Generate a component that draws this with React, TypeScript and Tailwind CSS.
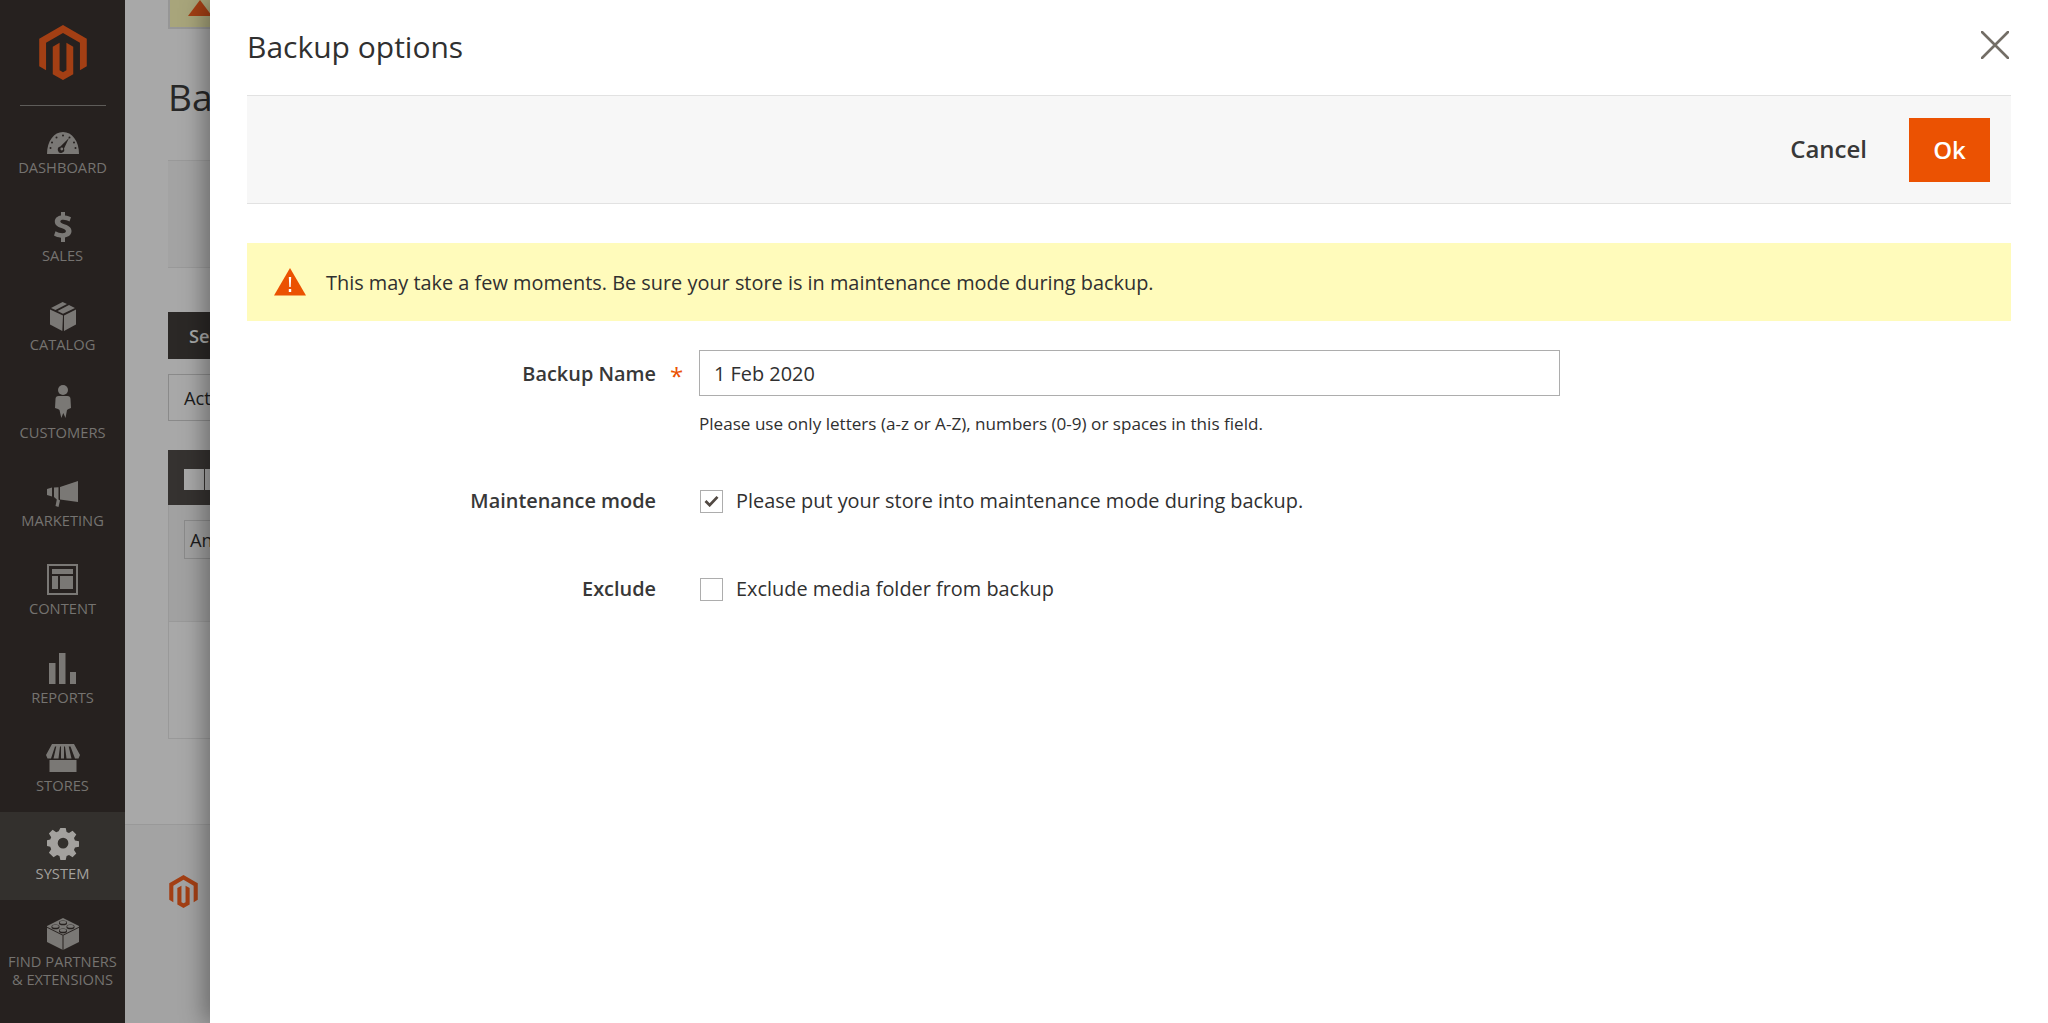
import React from "react";

const LOGO = "M21.6 0 0 12.5v25l6.2 3.6V16.1L21.6 7.2 37 16.1v25l6.2-3.6v-25L21.6 0zM24.7 41.1l-3.1 1.8-3.1-1.8V16.1l-6.2 3.6v25l9.3 5.3 9.3-5.3v-25l-6.2-3.6v25z";

function Logo({ className }: { className: string }) {
  return (
    <svg viewBox="0 0 43.2 50" className={className} fill="#a33f14" fillRule="evenodd">
      <path d={LOGO} />
    </svg>
  );
}

const c = "#7a7875";
const bg = "#26211f";

const Dashboard = () => (
  <svg viewBox="0 0 32 22" className="w-[32px] h-[22px]">
    <path fill={c} d="M0 22C0 9 7 0 16 0s16 9 16 22z" />
    <g fill={bg}>
      <circle cx="16" cy="3.5" r="1" /><circle cx="9.5" cy="5.5" r="1" /><circle cx="22.5" cy="5.5" r="1" />
      <circle cx="5" cy="10.5" r="1" /><circle cx="27" cy="10.5" r="1" /><circle cx="3.5" cy="16" r="1" /><circle cx="28.5" cy="16" r="1" />
      <path d="M22 6l-5 10.5a3.2 3.2 0 1 1-3.6-2z" />
    </g>
    <circle cx="14.8" cy="17" r="1.4" fill={c} />
  </svg>
);
const Sales = () => (
  <svg viewBox="0 0 18 30" className="w-[18px] h-[30px]">
    <path fill={c} d="M7 0h4v3.4c2.6.3 4.6 1 6 1.9l-1.5 4.300C13.600 8.400 11.400 7.700 9.300 7.700c-2 0-3 .7-3 1.700 0 1.200 1.500 1.900 4.700 3 4.500 1.500 6.500 3.500 6.500 6.700 0 3.300-2.300 5.700-6.500 6.400V30H7v-4.300c-2.800-.2-5.300-1-7-2.100l1.500-4.400c2 1.200 4.600 2 6.900 2 2.200 0 3.500-.8 3.500-2 0-1.300-1.400-2.100-4.500-3.100C3.300 14.700.8 12.800.8 9.500.8 6.400 3 4 7 3.400z" />
  </svg>
);
const Catalog = () => (
  <svg viewBox="0 0 26 29" className="w-[26px] h-[29px]">
    <path fill={c} d="M13 13.500 0 7.500v15l12.300 6.500zM14 13.500v15.500L26 22.500v-15zM12.600 0 1 6l4.500 2.100L17 2zM19 3l-11.500 6.100 5.500 2.600L25 6z" />
  </svg>
);
const Customers = () => (
  <svg viewBox="0 0 16 34" className="w-[16px] h-[34px]">
    <circle cx="8" cy="5" r="5" fill={c} />
    <path fill={c} d="M3.500 11h9c1.800 0 3 1.300 3 3l.5 9-2.500 1-1.500 1-1.500 8-2.200-5-2 5-1.800-8-1.500-1L0 23l.5-9c0-1.700 1.200-3 3-3z" />
  </svg>
);
const Marketing = () => (
  <svg viewBox="0 0 31 26" className="w-[31px] h-[26px]">
    <path fill={c} d="M31 0v21L13 18.500V6zM0 8l5-1.500v9L0 14zM7 6.500l4.500-.3v12.200l1.500 1.200L11.500 26 8.500 25l1.300-6.500L7 16z" />
  </svg>
);
const Content = () => (
  <svg viewBox="0 0 31 31" className="w-[31px] h-[31px]">
    <rect x="1" y="1" width="29" height="29" fill="none" stroke={c} strokeWidth="2" />
    <path fill={c} d="M5 5h21v5H5zM5 12h6v13H5zM13 12h13v13H13z" />
  </svg>
);
const Reports = () => (
  <svg viewBox="0 0 27 31" className="w-[27px] h-[31px]">
    <path fill={c} d="M0 10h6.500v21H0zM10 0h6.500v31H10zM21 19h6v12h-6z" />
  </svg>
);
const Stores = () => (
  <svg viewBox="0 0 34 28" className="w-[34px] h-[28px]">
    <path fill={c} d="M6 0h22l6 11-1.500 3.500H29L24.500 2.500h-1.800l2.800 12h-5L19 2.500h-1v12h-3v-12h-1l-1.500 12h-5l2.800-12H9L5 14.500H1.500L0 11zM3.500 16h27v12h-27z" />
  </svg>
);
const SystemIcon = () => (
  <svg viewBox="0 0 32 32" className="w-[32px] h-[32px]">
    <path fill="#a3a19e" fillRule="evenodd" d="M13 0h6l1 4.600 2.700 1.100 4-2.600 4.200 4.200-2.600 4 1.100 2.700 4.600 1v6l-4.600 1-1.100 2.700 2.600 4-4.200 4.200-4-2.600-2.700 1.100-1 4.600h-6l-1-4.600-2.700-1.100-4 2.600L.1 27.800l2.600-4-1.100-2.700L-3 20v-6l4.600-1 1.100-2.700-2.600-4L4.300 2.100l4 2.600L11 3.600z M16 11a6 6 0 1 0 0 12 6 6 0 0 0 0-12z" transform="translate(1.800 0) scale(.89)" />
  </svg>
);
const Partners = () => (
  <svg viewBox="0 0 32 32" className="w-[32px] h-[32px] relative top-[2px]">
    <path fill={c} d="M16 0 32 8v16L16 32 0 24V8z" />
    <path fill={bg} d="M0 8.700 16 16.700 32 8.700v1.100L16 17.800 0 9.800zM15.500 17h1v15h-1z" />
    <g fill={bg}>
      <path d="M12 4.500a4 2 0 0 1 8 0v.8a4 2 0 0 1-8 0zM4.500 8.500a4 2 0 0 1 8 0v.8a4 2 0 0 1-8 0zM19.500 8.500a4 2 0 0 1 8 0v.8a4 2 0 0 1-8 0zM12 12.500a4 2 0 0 1 8 0v.8a4 2 0 0 1-8 0z" />
    </g>
    <g fill={c}>
      <ellipse cx="16" cy="4.300" rx="3.300" ry="1.500" /><ellipse cx="8.500" cy="8.300" rx="3.300" ry="1.500" /><ellipse cx="23.500" cy="8.300" rx="3.300" ry="1.500" /><ellipse cx="16" cy="12.300" rx="3.300" ry="1.500" />
    </g>
  </svg>
);

const items: { label: React.ReactNode; icon: React.ReactNode; active?: boolean }[] = [
  { label: "DASHBOARD", icon: <Dashboard /> },
  { label: "SALES", icon: <Sales /> },
  { label: "CATALOG", icon: <Catalog /> },
  { label: "CUSTOMERS", icon: <Customers /> },
  { label: "MARKETING", icon: <Marketing /> },
  { label: "CONTENT", icon: <Content /> },
  { label: "REPORTS", icon: <Reports /> },
  { label: "STORES", icon: <Stores /> },
  { label: "SYSTEM", icon: <SystemIcon />, active: true },
  { label: <>FIND PARTNERS<br />&amp; EXTENSIONS</>, icon: <Partners /> },
];

function Sidebar() {
  return (
    <aside className="w-[125px] shrink-0 bg-[#26211f] flex flex-col">
      <div className="h-[106px] shrink-0 pt-[25px] flex flex-col items-center">
        <Logo className="w-[50px] h-[57px]" />
        <div className="mt-[25px] w-[86px] h-px bg-[#5e5c59]" />
      </div>
      {items.map((it, i) => (
        <div
          key={i}
          className={`h-[88.25px] shrink-0 flex flex-col items-center pt-[15px] ${it.active ? "bg-[#33302d] text-[#a3a19e]" : "text-[#757370]"}`}
        >
          <div className="h-[36px] flex items-end justify-center pb-[3px]">{it.icon}</div>
          <div className="text-[14.7px] leading-[18.500px] text-center mt-[1px] whitespace-nowrap">{it.label}</div>
        </div>
      ))}
    </aside>
  );
}

function Background() {
  return (
    <main className="flex-1 bg-[#a8a8a8] flex flex-col overflow-hidden pl-[43px] text-[#1c1c1c]">
      <div className="w-[100px] h-[29px] shrink-0 bg-[#a8a57b] border-b-2 border-l-2 border-[#969696] flex justify-start pl-[18px]">
        <div className="w-0 h-0 border-l-[12px] border-r-[12px] border-b-[16px] border-l-transparent border-r-transparent border-b-[#a33f14]" />
      </div>
      <div className="text-[37px] leading-[50px] mt-[43px] text-[#272727]">Backup</div>
      <div className="mt-[38px] w-[100px] h-[108px] shrink-0 bg-[#a3a3a3] border-y border-[#999]" />
      <div className="mt-[44px] w-[100px] h-[47px] shrink-0 bg-[#2b2826] text-[#a8a8a8] font-semibold text-[18.3px] leading-[47px] pl-[21px]">Select</div>
      <div className="mt-[15px] w-[100px] h-[47px] shrink-0 border border-[#8a8a8a] text-[18.3px] leading-[45px] pl-[15px]">Actions</div>
      <div className="mt-[29px] w-[100px] h-[55px] shrink-0 bg-[#353230] pl-[16px] pt-[19px] flex gap-px">
        <div className="w-[20px] h-[21px] bg-[#a8a8a8]" />
        <div className="w-[20px] h-[21px] bg-[#a8a8a8]" />
      </div>
      <div className="w-[100px] h-[116px] shrink-0 bg-[#a1a1a1] border-l border-[#999] pl-[15px] pt-[15px]">
        <div className="w-[100px] h-[39px] border border-[#8a8a8a] text-[18.3px] leading-[37px] pl-[5px]">Any</div>
      </div>
      <div className="w-[100px] h-[118px] shrink-0 border border-[#999] border-r-0" />
      <div className="grow" />
      <footer className="-ml-[43px] h-[199px] shrink-0 bg-[#a3a3a3] border-t border-[#999] pl-[44px] pt-[50px]">
        <Logo className="w-[29px] h-[33px]" />
      </footer>
    </main>
  );
}

const Check = ({ checked }: { checked?: boolean }) => (
  <span className="w-[23px] h-[23px] shrink-0 border border-[#adadad] bg-white flex items-center justify-center">
    {checked && (
      <svg viewBox="0 0 16 13" className="w-[15px] h-[12px]">
        <path d="M1.500 6.500 6 11 14.500 2" fill="none" stroke="#514943" strokeWidth="3" />
      </svg>
    )}
  </span>
);

function Modal() {
  return (
    <section className="absolute top-0 bottom-0 left-[210px] right-0 bg-white shadow-[-6px_0_22px_rgba(0,0,0,0.35)] pl-[37px] pr-[37px] text-[#303030]">
      <header className="h-[95px] flex items-center justify-between pb-[2px]">
        <h1 className="text-[30px] font-normal leading-none">Backup options</h1>
        <button aria-label="Close" className="mr-[2px] mb-[3px]">
          <svg viewBox="0 0 28 28" className="w-[28px] h-[28px]">
            <path d="M1 1 27 27M27 1 1 27" stroke="#736e66" strokeWidth="2.600" strokeLinecap="round" />
          </svg>
        </button>
      </header>
      <div className="h-[109px] bg-[#f7f7f7] border-y border-[#e2e2e2] flex items-center justify-end pr-[21px]">
        <button className="text-[24px] leading-[32px] mb-[2px] font-semibold text-[#383838] mr-[42px]">Cancel</button>
        <button className="w-[81px] h-[64px] bg-[#eb5202] text-white text-[24px] font-semibold">Ok</button>
      </div>
      <div className="mt-[39px] h-[78px] bg-[#fffbbb] flex items-center pl-[27px]">
        <svg viewBox="0 0 32 28" className="w-[32px] h-[28px] shrink-0">
          <path d="M16 0 32 27.500H0z" fill="#eb5202" />
          <path d="M14.800 9h2.400l-.5 10h-1.400zM14.800 21h2.400v3h-2.400z" fill="#fff" />
        </svg>
        <span className="ml-[20px] text-[19.900px] leading-[30px] pt-[1px]">This may take a few moments. Be sure your store is in maintenance mode during backup.</span>
      </div>
      <div className="mt-[29px] flex">
        <label className="w-[409px] h-[46px] leading-[48px] text-right font-semibold text-[19.900px] text-[#383838]">Backup Name</label>
        <span className="w-[43px] h-[46px] pl-[14px] leading-[52px] text-[#eb5202] text-[24px]">*</span>
        <div>
          <div className="w-[861px] h-[46px] border border-[#adadad] leading-[46px] pl-[14px] text-[19.900px]">1 Feb 2020</div>
          <p className="mt-[16px] text-[17.100px] leading-[24px]">Please use only letters (a-z or A-Z), numbers (0-9) or spaces in this field.</p>
        </div>
      </div>
      <div className="mt-[53px] flex items-center h-[24px]">
        <label className="w-[409px] text-right font-semibold text-[19.900px] text-[#383838]">Maintenance mode</label>
        <span className="w-[44px]" />
        <Check checked />
        <span className="ml-[13px] text-[19.900px]">Please put your store into maintenance mode during backup.</span>
      </div>
      <div className="mt-[64px] flex items-center h-[24px]">
        <label className="w-[409px] text-right font-semibold text-[19.900px] text-[#383838]">Exclude</label>
        <span className="w-[44px]" />
        <Check />
        <span className="ml-[13px] text-[19.900px]">Exclude media folder from backup</span>
      </div>
    </section>
  );
}

export default function App() {
  return (
    <div className="relative flex w-[2048px] h-[1023px] overflow-hidden font-['Open_Sans',sans-serif]">
      <Sidebar />
      <Background />
      <Modal />
    </div>
  );
}
